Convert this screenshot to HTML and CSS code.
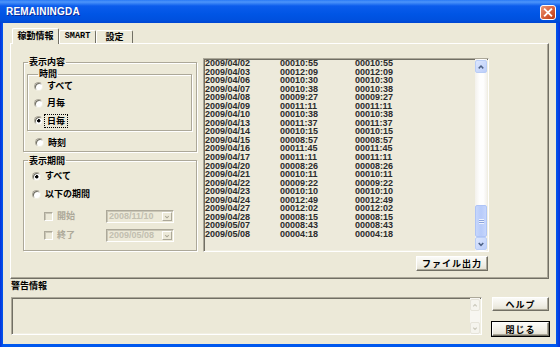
FILE: index.html
```html
<!DOCTYPE html>
<html lang="ja">
<head>
    <meta charset="UTF-8">
    <meta name="viewport" content="width=device-width, initial-scale=1.0">
    <title>REMAININGDA</title>
    <link rel="stylesheet" href="styles.css">
</head>
<body>
<div class="window">
    <div class="titlebar">
        <span class="title">REMAININGDA</span>
        <span class="close-btn">
            <svg width="16" height="15" viewBox="0 0 16 15">
                <defs>
                    <linearGradient id="closeGrad" x1="0" y1="0" x2="1" y2="1">
                        <stop offset="0" stop-color="#ec9a7c"/>
                        <stop offset="0.5" stop-color="#d9643e"/>
                        <stop offset="1" stop-color="#b83610"/>
                    </linearGradient>
                </defs>
                <rect x="0.5" y="0.5" width="15" height="14" rx="2.5" fill="url(#closeGrad)" stroke="#fff"/>
                <path d="M4.8 4.3 L11.2 10.7 M11.2 4.3 L4.8 10.7" stroke="#fff" stroke-width="1.9" stroke-linecap="square"/>
            </svg>
        </span>
    </div>

    <div class="client">
        <div class="tabs">
            <div class="tab tab-main active">稼動情報</div>
            <div class="tab tab-smart">SMART</div>
            <div class="tab tab-conf">設定</div>
        </div>

        <div class="panel">
            <div class="left-col">
                <fieldset class="group group-content">
                    <legend>表示内容</legend>
                    <fieldset class="group group-time">
                        <legend>時間</legend>
                        <div class="opt opt-first"><span class="radio"></span><span class="opt-text">すべて</span></div>
                        <div class="opt"><span class="radio"></span><span class="opt-text">月毎</span></div>
                        <div class="opt"><span class="radio checked"></span><span class="opt-text focus">日毎</span></div>
                    </fieldset>
                    <div class="opt opt-clock"><span class="radio"></span><span class="opt-text">時刻</span></div>
                </fieldset>

                <fieldset class="group group-period">
                    <legend>表示期間</legend>
                    <div class="opt opt-all"><span class="radio checked"></span><span class="opt-text">すべて</span></div>
                    <div class="opt opt-range"><span class="radio"></span><span class="opt-text">以下の期間</span></div>
                    <div class="opt opt-date opt-start">
                        <span class="check"></span><span class="opt-text disabled date-label">開始</span>
                        <span class="combo"><span class="combo-text">2008/11/10</span><span class="combo-btn"><svg width="9" height="9" viewBox="0 0 9 9"><path d="M2.5 4 L4.5 6 L6.5 4" fill="none" stroke="#aca899" stroke-width="1.2"/></svg></span></span>
                    </div>
                    <div class="opt opt-date opt-end">
                        <span class="check"></span><span class="opt-text disabled date-label">終了</span>
                        <span class="combo"><span class="combo-text">2009/05/08</span><span class="combo-btn"><svg width="9" height="9" viewBox="0 0 9 9"><path d="M2.5 4 L4.5 6 L6.5 4" fill="none" stroke="#aca899" stroke-width="1.2"/></svg></span></span>
                    </div>
                </fieldset>
            </div>

            <div class="right-col">
                <div class="listbox">
                    <div class="rows">
                        <div class="row"><span>2009/04/02</span><span>00010:55</span><span>00010:55</span></div>
                        <div class="row"><span>2009/04/03</span><span>00012:09</span><span>00012:09</span></div>
                        <div class="row"><span>2009/04/06</span><span>00010:30</span><span>00010:30</span></div>
                        <div class="row"><span>2009/04/07</span><span>00010:38</span><span>00010:38</span></div>
                        <div class="row"><span>2009/04/08</span><span>00009:27</span><span>00009:27</span></div>
                        <div class="row"><span>2009/04/09</span><span>00011:11</span><span>00011:11</span></div>
                        <div class="row"><span>2009/04/10</span><span>00010:38</span><span>00010:38</span></div>
                        <div class="row"><span>2009/04/13</span><span>00011:37</span><span>00011:37</span></div>
                        <div class="row"><span>2009/04/14</span><span>00010:15</span><span>00010:15</span></div>
                        <div class="row"><span>2009/04/15</span><span>00008:57</span><span>00008:57</span></div>
                        <div class="row"><span>2009/04/16</span><span>00011:45</span><span>00011:45</span></div>
                        <div class="row"><span>2009/04/17</span><span>00011:11</span><span>00011:11</span></div>
                        <div class="row"><span>2009/04/20</span><span>00008:26</span><span>00008:26</span></div>
                        <div class="row"><span>2009/04/21</span><span>00010:11</span><span>00010:11</span></div>
                        <div class="row"><span>2009/04/22</span><span>00009:22</span><span>00009:22</span></div>
                        <div class="row"><span>2009/04/23</span><span>00010:10</span><span>00010:10</span></div>
                        <div class="row"><span>2009/04/24</span><span>00012:49</span><span>00012:49</span></div>
                        <div class="row"><span>2009/04/27</span><span>00012:02</span><span>00012:02</span></div>
                        <div class="row"><span>2009/04/28</span><span>00008:15</span><span>00008:15</span></div>
                        <div class="row"><span>2009/05/07</span><span>00008:43</span><span>00008:43</span></div>
                        <div class="row"><span>2009/05/08</span><span>00004:18</span><span>00004:18</span></div>
                    </div>
                    <div class="vscroll">
                        <span class="sb-btn sb-up"><svg width="11" height="12" viewBox="0 0 11 12"><path d="M3 7.5 L5.5 5 L8 7.5" fill="none" stroke="#4d6185" stroke-width="1.6"/></svg></span>
                        <span class="sb-track">
                            <span class="sb-thumb"><span class="grip"></span></span>
                        </span>
                        <span class="sb-btn sb-down"><svg width="11" height="12" viewBox="0 0 11 12"><path d="M3 5 L5.5 7.5 L8 5" fill="none" stroke="#4d6185" stroke-width="1.6"/></svg></span>
                    </div>
                </div>
                <button class="btn btn-export">ファイル出力</button>
            </div>
        </div>

        <div class="warn-label">警告情報</div>
        <div class="bottom">
            <div class="warnbox">
                <div class="vscroll vscroll-off">
                    <span class="sb-btn"><svg width="9" height="11" viewBox="0 0 9 11"><path d="M2.5 6.5 L4.5 4.5 L6.5 6.5" fill="none" stroke="#c9c7ba" stroke-width="1.3"/></svg></span>
                    <span class="sb-track"></span>
                    <span class="sb-btn"><svg width="9" height="11" viewBox="0 0 9 11"><path d="M2.5 4.5 L4.5 6.5 L6.5 4.5" fill="none" stroke="#c9c7ba" stroke-width="1.3"/></svg></span>
                </div>
            </div>
            <div class="side-buttons">
                <button class="btn">ヘルプ</button>
                <button class="btn btn-default">閉じる</button>
            </div>
        </div>
    </div>
</div>
</body>
</html>
```

FILE: styles.css
```css
body {
    margin: 0;
    font-family: "Noto Sans CJK JP", "Liberation Sans", sans-serif;
    font-size: 9px;
    color: #000;
}
.window {
    width: 560px;
    height: 347px;
    box-sizing: border-box;
    display: flex;
    flex-direction: column;
    background: linear-gradient(90deg, #0831d9 0, #0058ee 3px, #0058ee 556px, #0831d9 560px);
}
.titlebar {
    height: 23px;
    flex: none;
    display: flex;
    align-items: center;
    justify-content: space-between;
    padding: 0 4px 0 6px;
    background: linear-gradient(#2a7af5 0, #4d95fa 2px, #0b5cec 6px, #0055e5 14px, #0050de 20px, #0046d2 23px);
}
.title {
    color: #fff;
    font-family: "Liberation Sans", sans-serif;
    font-weight: bold;
    font-size: 10px;
    letter-spacing: 0.2px;
    text-shadow: 1px 1px 0 #0a2a9a;
}
.close-btn {
    display: flex;
    margin-top: 1px;
}
.client {
    flex: 1;
    margin: 0 4px 3px 3px;
    background: #ece9d8;
    padding: 5px 7px 0;
    display: flex;
    flex-direction: column;
}

/* tabs */
.tabs {
    display: flex;
    align-items: flex-end;
    height: 15px;
    margin-left: 2px;
}
.tab {
    height: 13px;
    box-sizing: border-box;
    line-height: 11px;
    text-align: center;
    font-weight: bold;
    border-top: 1px solid #fff;
    border-left: 1px solid #fff;
    border-right: 1px solid #716f64;
    border-radius: 2px 2px 0 0;
}
.tab-main {
    width: 47px;
}
.tab-smart {
    width: 37px;
    font-family: "Liberation Mono", monospace;
    font-size: 8.5px;
}
.tab-conf {
    width: 37px;
}
.tab.active {
    height: 16px;
    line-height: 13px;
    margin-bottom: -1px;
    position: relative;
    z-index: 1;
    background: #ece9d8;
}

/* panel */
.panel {
    height: 236px;
    box-sizing: border-box;
    border-top: 1px solid #fff;
    border-left: 1px solid #fff;
    border-right: 1px solid #716f64;
    border-bottom: 1px solid #716f64;
    box-shadow: inset -1px -1px 0 #aca899;
    padding: 13px 0 0 12px;
    display: flex;
}
.left-col {
    width: 174px;
}
.group {
    margin: 0;
    padding: 0;
    min-width: 0;
    box-sizing: border-box;
    border: 1px solid #aca899;
    box-shadow: 1px 1px 0 #fff, inset 1px 1px 0 #fff;
}
.group legend {
    margin-left: 4px;
    padding: 0 1px;
    line-height: 10px;
    font-weight: bold;
}
.group-content {
    padding-bottom: 1px;
}
.group-time {
    margin: 2px 4px 0 3px;
    padding: 0 0 2px 6px;
}
.group-period {
    margin-top: 4px;
    padding-bottom: 8px;
}
.opt {
    display: flex;
    align-items: center;
    height: 14px;
    margin-top: 3.25px;
}
.opt-first {
    margin-top: 0;
}
.opt-clock {
    margin-top: 5px;
    padding-left: 11px;
}
.opt-all {
    margin-top: 3.5px;
    padding-left: 8px;
}
.opt-range {
    margin-top: 4px;
    padding-left: 8px;
}
.opt-date {
    padding-left: 20px;
}
.opt-start {
    margin-top: 8px;
}
.opt-end {
    margin-top: 5px;
}
.opt-text {
    font-weight: bold;
    margin-left: 4px;
    line-height: 12px;
}
.opt-text.focus {
    outline: 1px dotted #000;
    padding: 0 2px;
    margin-left: 2px;
}
.opt-text.disabled {
    color: #aca899;
}
.date-label {
    width: 49px;
}
.radio {
    width: 9px;
    height: 9px;
    flex: none;
    box-sizing: border-box;
    border-radius: 50%;
    background: #fff;
    border: 1px solid;
    border-color: #aca899 #f1efe2 #f1efe2 #aca899;
    box-shadow: inset 1px 1px 0 #716f64;
}
.radio.checked {
    background: radial-gradient(circle at 55% 55%, #000 0, #000 1.4px, #fff 1.9px);
}
.check {
    width: 9px;
    height: 9px;
    flex: none;
    box-sizing: border-box;
    background: #ece9d8;
    border: 1px solid;
    border-color: #aca899 #fff #fff #aca899;
    box-shadow: inset 1px 1px 0 #c9c6b6;
}
.combo {
    width: 68px;
    height: 13px;
    box-sizing: border-box;
    display: flex;
    align-items: center;
    border: 1px solid;
    border-color: #aca899 #fff #fff #aca899;
    box-shadow: inset 1px 1px 0 #c9c6b6;
    background: #ece9d8;
}
.combo-text {
    flex: 1;
    padding-left: 2px;
    font-family: "Liberation Sans", sans-serif;
    font-weight: bold;
    font-size: 9px;
    color: #c2bfb0;
}
.combo-btn {
    width: 10px;
    height: 9px;
    margin-right: 1px;
    display: flex;
    border: 1px solid;
    border-color: #fff #aca899 #aca899 #fff;
    box-sizing: border-box;
    align-items: center;
    justify-content: center;
}

/* list */
.right-col {
    margin-left: 6px;
    width: 286px;
    display: flex;
    flex-direction: column;
}
.listbox {
    margin-top: 1px;
    height: 194px;
    box-sizing: border-box;
    display: flex;
    border: 1px solid;
    border-color: #aca899 #fff #fff #aca899;
    box-shadow: inset 1px 1px 0 #716f64, inset -1px -1px 0 #f1efe2;
    background: #edeadb;
}
.rows {
    flex: 1;
    padding-left: 1px;
    font-family: "Liberation Sans", sans-serif;
    font-weight: bold;
    font-size: 9px;
    color: #2b2b2b;
}
.row {
    display: grid;
    grid-template-columns: 75px 75px auto;
    line-height: 8.55px;
    height: 8.55px;
}
.vscroll {
    width: 12px;
    margin-right: 1px;
    display: flex;
    flex-direction: column;
    background: linear-gradient(90deg, #f3f1ec, #fefefe 40%, #fefefe 70%, #f3f1ec);
}
.sb-btn {
    height: 13px;
    margin: 1px 0 0;
    flex: none;
    display: flex;
    align-items: center;
    justify-content: center;
    box-sizing: border-box;
    border: 1px solid #b9cdf6;
    border-radius: 2px;
    background: linear-gradient(135deg, #dde7fd, #bccefa);
}
.sb-down {
    margin: 0 0 1px;
}
.sb-track {
    flex: 1;
    display: flex;
    flex-direction: column;
    justify-content: flex-end;
}
.sb-thumb {
    height: 32px;
    box-sizing: border-box;
    border: 1px solid #aec4f6;
    border-radius: 2px;
    background: linear-gradient(90deg, #c6d6fc, #b7cbfa 50%, #c6d6fc);
    display: flex;
    align-items: center;
    justify-content: center;
}
.grip {
    width: 5px;
    height: 5px;
    background: repeating-linear-gradient(#eef3fe 0, #eef3fe 1px, #8ca4dc 1px, #8ca4dc 2px);
}
.btn {
    font-family: "Noto Sans CJK JP", sans-serif;
    font-weight: bold;
    font-size: 9px;
    letter-spacing: 1px;
    height: 14px;
    padding: 0;
    line-height: 11px;
    color: #000;
    background: linear-gradient(#fbfbf8, #f0eee5 60%, #e4e1d3);
    border: 1px solid;
    border-color: #fff #716f64 #716f64 #fff;
    box-shadow: inset -1px -1px 0 #aca899;
}
.btn-export {
    width: 72px;
    height: 15px;
    margin-top: 4px;
    align-self: flex-end;
    margin-right: 1px;
}

/* bottom */
.warn-label {
    height: 18px;
    line-height: 14px;
    padding-left: 1px;
    font-weight: bold;
}
.bottom {
    display: flex;
}
.warnbox {
    margin-left: 1px;
    width: 471px;
    height: 38px;
    box-sizing: border-box;
    display: flex;
    justify-content: flex-end;
    border: 1px solid;
    border-color: #aca899 #fff #fff #aca899;
    box-shadow: inset 1px 1px 0 #716f64, inset -1px -1px 0 #f1efe2;
}
.vscroll-off {
    width: 10px;
    background: #f7f6f1;
}
.vscroll-off .sb-btn {
    height: 12px;
    border-color: #e6e4da;
    background: #f5f4ee;
}
.side-buttons {
    margin-left: 10px;
    width: 57px;
    display: flex;
    flex-direction: column;
    gap: 11px;
}
.side-buttons .btn {
    width: 57px;
}
.btn-default {
    outline: 1px solid #000;
    outline-offset: 0;
}
```
